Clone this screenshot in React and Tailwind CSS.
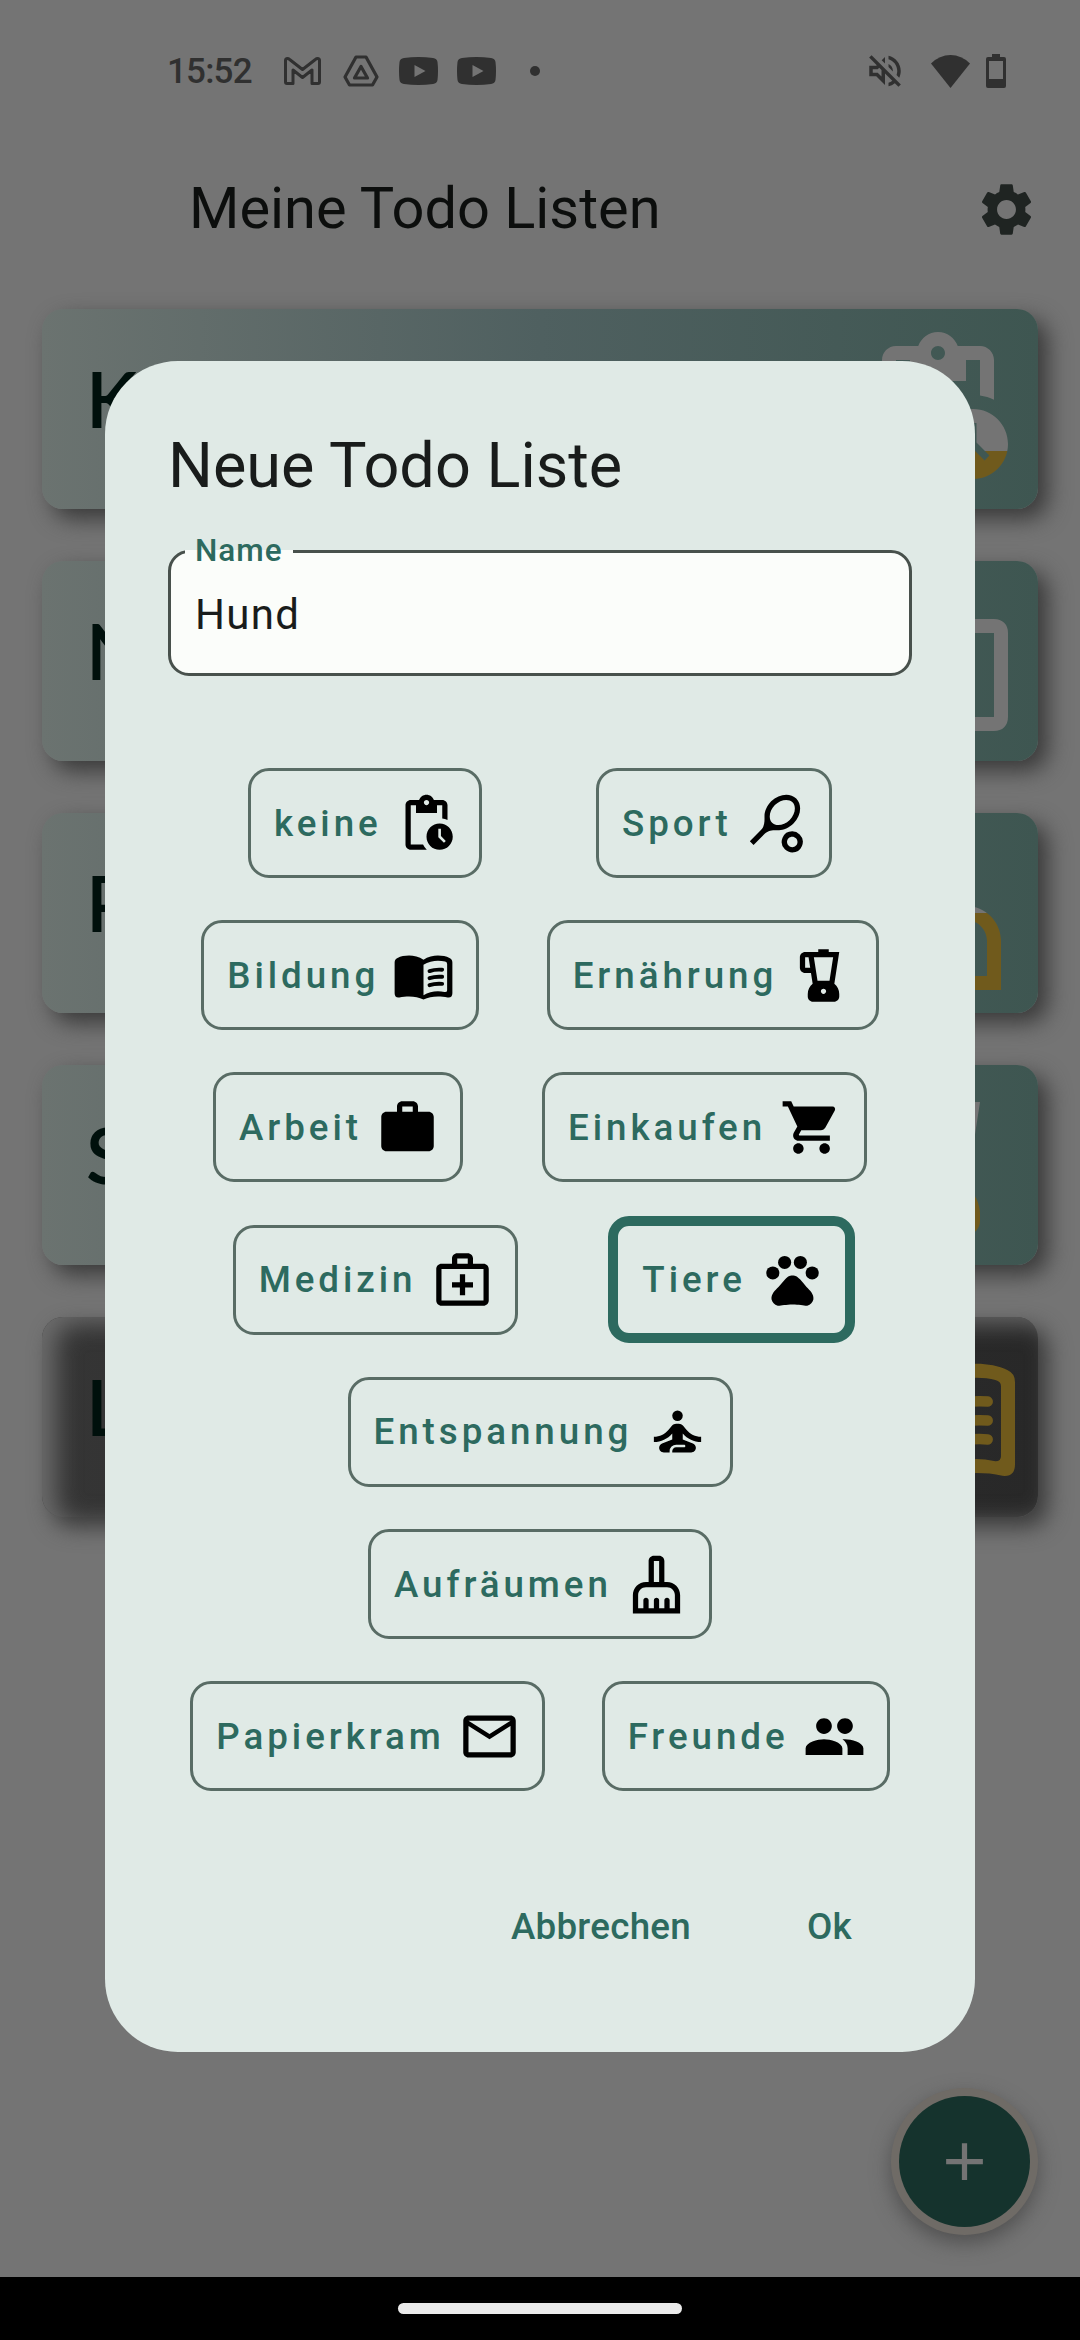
import React from "react";
import {
  MdSettings, MdAdd, MdOutlinePendingActions, MdSportsTennis, MdBlender, MdWork,
  MdShoppingCart, MdOutlineMedicalServices, MdPets, MdSelfImprovement, MdOutlineCleaningServices,
  MdMailOutline, MdPeople, MdOutlineVolumeOff,
} from "react-icons/md";

function StatusBar() {
  return (
    <header className="flex h-[142px] w-full items-center pl-[167px] pr-[74px] text-[#303030]">
      <span className="w-[117px] text-[35px] font-medium leading-none tracking-[-0.800px]">15:52</span>
      <svg className="h-[28px] w-[37px]" viewBox="0 0 37 28" fill="none" stroke="currentColor" strokeWidth="3" strokeLinejoin="round">
        <path d="M1.5 3.5v21.5q0 1.5 1.5 1.5h6V13l9.5 7.5L28 13v13.500h6q1.500 0 1.500-1.500V3.500q0-2-2-2-1 0-1.800.7L18.500 12.500 5.300 2.200q-.8-.7-1.800-.7-2 0-2 2z" />
      </svg>
      <svg className="ml-[22px] h-[32px] w-[36px]" viewBox="0 0 36 32" fill="none" stroke="currentColor" strokeWidth="3.200" strokeLinejoin="round">
        <path d="M13 2h10l11 20-4.500 8h-23L2 22z" />
        <path d="M18 11.500l6.500 11.500h-13z" />
      </svg>
      {[0, 1].map((i) => (
        <svg key={i} className="ml-[19.500px] h-[28px] w-[39px]" viewBox="0 0 39 28" fill="currentColor">
          <path fillRule="evenodd" d="M5 1Q19.500-1 34 1q4 .5 4.500 4 1 9 0 18-.5 3.500-4.500 4-14.500 2-29 0-4-.5-4.500-4-1-9 0-18Q1 1.500 5 1zM15.500 8v12l11-6z" />
        </svg>
      ))}
      <i className="ml-[34px] h-[10px] w-[10px] rounded-full bg-[#303030]" />
      <div className="ml-auto flex items-center">
        <MdOutlineVolumeOff className="h-[42px] w-[42px]" />
        <svg className="ml-[25px] h-[33px] w-[39px]" viewBox="0 0 39 33" fill="currentColor">
          <path d="M19.500 33L0 8.500Q8.500 0 19.500 0T39 8.500z" />
        </svg>
        <svg className="ml-[16px] h-[34px] w-[20px]" viewBox="0 0 20 34" fill="currentColor">
          <path fillRule="evenodd" d="M6 0h8v3h4q2 0 2 2v27q0 2-2 2H2q-2 0-2-2V5q0-2 2-2h4zM3 7v18h14V7z" />
        </svg>
      </div>
    </header>
  );
}

function BookIcon({ className, fill = "currentColor" }) {
  return (
    <svg className={className} viewBox="0 0 24 24" fill={fill}>
      <path
        fillRule="evenodd"
        d="M12 6C10.400 4.900 8.200 4.400 6.500 4.400 4.900 4.400 3.300 4.700 2.100 5.300Q1 5.800 1 7V18.800Q1 20.600 2.800 20.400C4 20.100 5.300 20 6.500 20 8.600 20 10.300 20.400 12 21.100 13.700 20.400 15.400 20 17.500 20 18.700 20 20 20.100 21.200 20.400Q23 20.600 23 18.800V7Q23 5.800 21.900 5.300C20.700 4.700 19.100 4.400 17.500 4.400 15.800 4.400 13.600 4.900 12 6zM12 7.900C13.600 6.900 15.800 6.400 17.500 6.400 18.500 6.400 19.400 6.500 20.200 6.700Q21 6.900 21 7.600V17.600Q21 18.400 20 18.300C19.200 18.100 18.300 18 17.500 18 15.600 18 13.600 18.600 12 19.500z"
      />
      <path
        fill="none"
        stroke={fill}
        strokeWidth="1.500"
        strokeLinecap="round"
        d="M14.300 10.300q2.100-.7 4.800-.5M14.300 13q2.100-.7 4.800-.5M14.300 15.700q2.100-.7 4.800-.5"
      />
    </svg>
  );
}

function FrameIcon({ className, fill }) {
  return (
    <svg className={className} viewBox="0 0 24 24" fill="none" stroke={fill} strokeWidth="2">
      <path d="M4 7h16q1 0 1 1v12q0 1-1 1H4q-1 0-1-1V8q0-1 1-1z" />
    </svg>
  );
}

const cards = [
  { letter: "K", Icon: MdOutlinePendingActions, fill: "url(#open75)" },
  { letter: "N", Icon: FrameIcon, fill: "#747474" },
  { letter: "P", Icon: MdOutlineCleaningServices, fill: "url(#open50)" },
  { letter: "S", Icon: MdBlender, fill: "url(#open60)" },
  { letter: "L", Icon: BookIcon, fill: "#705a1c", done: true },
];

function ProgressFills() {
  return (
    <svg className="absolute h-0 w-0">
      <defs>
        {[["open75", 0.752], ["open50", 0.5], ["open60", 0.6]].map(([id, stop]) => (
          <linearGradient key={id} id={id} gradientUnits="userSpaceOnUse" x1="0" y1="0" x2="0" y2="24">
            <stop offset={stop} stopColor="#747474" />
            <stop offset={stop} stopColor="#705a1c" />
          </linearGradient>
        ))}
      </defs>
    </svg>
  );
}

function TodoCard({ letter, Icon, fill, done }) {
  const tone = done
    ? "bg-gradient-to-r from-[#353535] to-[#282828] shadow-[10px_10px_22px_0px_#3a3a3a,inset_14px_6px_24px_0px_#6c6c6c]"
    : "bg-gradient-to-r from-[#6b7370] via-[#4f6060] to-[#3e5651] shadow-[10px_10px_22px_0px_#3a3a3a]";
  return (
    <div className={"flex h-[200px] w-full items-center justify-between rounded-[21px] pl-[44px] pr-[16px] " + tone}>
      <span className="pb-[20px] font-['Lato'] text-[76px] font-semibold leading-none text-[#00100c]">{letter}</span>
      <Icon className="h-[168px] w-[168px]" fill={fill} />
    </div>
  );
}

const rows = [
  [["keine", MdOutlinePendingActions, "w-[234px]"], ["Sport", MdSportsTennis, "w-[236px]"]],
  [["Bildung", BookIcon, "w-[278px]"], ["Ernährung", MdBlender, "w-[332px]"]],
  [["Arbeit", MdWork, "w-[250px]"], ["Einkaufen", MdShoppingCart, "w-[325px]"]],
  [["Medizin", MdOutlineMedicalServices, "w-[285px]"], ["Tiere", MdPets, "w-[247px]", true]],
  [["Entspannung", MdSelfImprovement, "w-[385px]"]],
  [["Aufräumen", MdOutlineCleaningServices, "w-[344px]"]],
  [["Papierkram", MdMailOutline, "w-[355px]"], ["Freunde", MdPeople, "w-[288px]"]],
];

function Category({ label, Icon, width, selected }) {
  const frame = selected
    ? "-mx-[8px] h-[127px] border-[10.5px] border-[#2d6a5f] pl-[24px]"
    : "h-[110px] border-[3px] border-[#596c65] pl-[23px]";
  return (
    <button className={"flex shrink-0 items-center justify-between rounded-[21px] pr-[21px] " + frame + " " + width}>
      <span className="whitespace-nowrap pt-[2px] text-[36.750px] font-medium leading-none tracking-[3.940px] text-[#2d6a5f]">{label}</span>
      <Icon className="h-[63px] w-[63px] shrink-0 text-black" />
    </button>
  );
}

function NewListDialog() {
  return (
    <section className="absolute left-[105px] top-[361px] flex h-[1691px] w-[870px] flex-col rounded-[73px] bg-[#e0eae6] px-[63px] pt-[63px]">
      <h2 className="h-[84px] text-[63px] leading-[84px] text-[#191c1b]">Neue Todo Liste</h2>
      <div className="relative mt-[42px] flex h-[126px] items-center rounded-[21px] border-[3px] border-[#48514c] bg-[#fbfdfa] px-[24px]">
        <span className="absolute left-[14px] top-[-3px] h-[6px] w-[108px] bg-[#fbfdfa]" />
        <label className="absolute left-[24px] top-[-20px] text-[31.500px] font-medium leading-[36px] tracking-[1px] text-[#2d6a5f]">Name</label>
        <span className="pt-[3px] text-[42px] leading-[48px] tracking-[1.300px] text-[#191c1b]">Hund</span>
      </div>
      <div className="mt-[71px] flex flex-col">
        {rows.map((row, i) => (
          <div key={i} className="flex h-[152.200px] items-center justify-evenly gap-[34px]">
            {row.map(([label, Icon, width, selected]) => (
              <Category key={label} label={label} Icon={Icon} width={width} selected={selected} />
            ))}
          </div>
        ))}
      </div>
      <div className="mt-[89px] flex justify-end gap-[116px] pr-[60px] text-[36.750px] font-medium leading-[52px] tracking-[0.260px] text-[#2d6a5f]">
        <button>Abbrechen</button>
        <button>Ok</button>
      </div>
    </section>
  );
}

export default function App() {
  return (
    <div className="relative flex h-[2340px] w-[1080px] flex-col overflow-hidden bg-[#747474] font-['Roboto',sans-serif]">
      <ProgressFills />
      <StatusBar />
      <div className="flex h-[134px] items-center justify-between pl-[189px] pr-[42px]">
        <h1 className="text-[57.750px] leading-none text-[#0c0e0d]">Meine Todo Listen</h1>
        <MdSettings className="h-[63px] w-[63px] text-[#1f2422]" />
      </div>
      <main className="flex flex-1 flex-col gap-[52px] px-[42px] pt-[33px]">
        {cards.map((card) => (
          <TodoCard key={card.letter} {...card} />
        ))}
      </main>
      <footer className="flex h-[63px] justify-center bg-black pt-[26px]">
        <div className="h-[11px] w-[284px] rounded-full bg-[#ebebeb]" />
      </footer>
      <div className="absolute left-[891px] top-[2088px] rounded-full bg-[#6f6b66] p-[8px] shadow-[0px_8px_20px_0px_#505050]">
        <button className="flex h-[131px] w-[131px] items-center justify-center rounded-full bg-[#15332d] text-[#747474]">
          <MdAdd className="h-[63px] w-[63px]" />
        </button>
      </div>
      <NewListDialog />
    </div>
  );
}
